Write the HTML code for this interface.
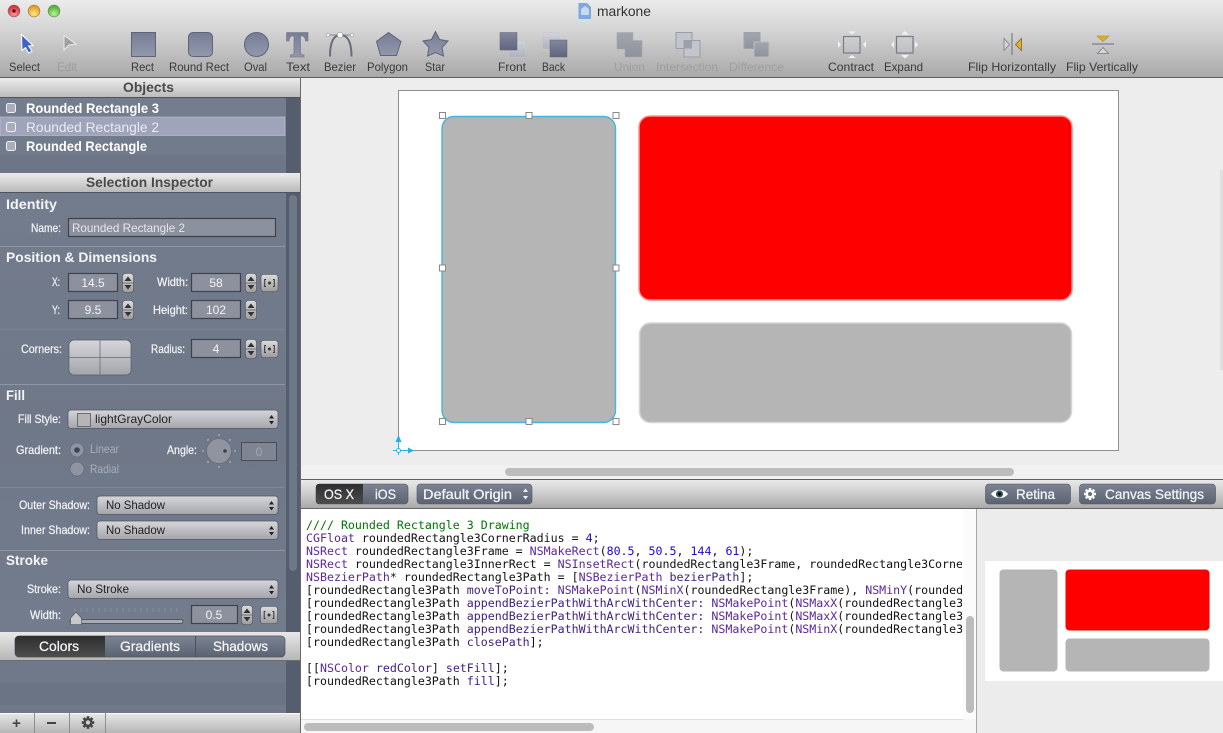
<!DOCTYPE html>
<html><head><meta charset="utf-8"><title>markone</title>
<style>
html,body{margin:0;padding:0;background:#ededed;overflow:hidden}
svg{display:block}
text{font-family:"Liberation Sans",sans-serif;font-size:11px;white-space:pre}
.t{fill:#3a3a3a;font-size:12px}
.d{fill:#9e9e9e;font-size:12px}
.l{fill:#f0f1f4;font-size:12px;stroke:#f0f1f4;stroke-width:.25px}
.h{fill:#f4f5f7;font-size:14px;font-weight:bold}
.o{fill:#fff;font-size:14px;font-weight:bold}
.hd{fill:#4a4a4a;font-size:14px;font-weight:bold}
.v{fill:#f2f3f6;font-size:12px;text-anchor:middle}
.p{fill:#222;font-size:12px}
.b{fill:#f4f5f7;font-size:14px;stroke:#f4f5f7;stroke-width:.25px}
.c{font-family:"DejaVu Sans Mono","Liberation Mono",monospace;font-size:11.62px;fill:#111}
.g{fill:#007400}.m{fill:#5c2699}.n{fill:#2a00cf}.k{fill:#3d1d81}
</style></head><body>
<svg xmlns="http://www.w3.org/2000/svg" width="1223" height="733" viewBox="0 0 1223 733">
<defs>
<linearGradient id="tb" x1="0" y1="0" x2="0" y2="1"><stop offset="0" stop-color="#ebebeb"/><stop offset=".4" stop-color="#d4d4d4"/><stop offset="1" stop-color="#a9a9a9"/></linearGradient>
<linearGradient id="hd" x1="0" y1="0" x2="0" y2="1"><stop offset="0" stop-color="#ececec"/><stop offset="1" stop-color="#b9b9b9"/></linearGradient>
<linearGradient id="pn" x1="0" y1="0" x2="0" y2="1"><stop offset="0" stop-color="#737c8c"/><stop offset=".55" stop-color="#6f7888"/><stop offset="1" stop-color="#737c8c"/></linearGradient>
<linearGradient id="ic" x1="0" y1="0" x2="0" y2="1"><stop offset="0" stop-color="#777d95"/><stop offset="1" stop-color="#9297ab"/></linearGradient>
<linearGradient id="dk" x1="0" y1="0" x2="0" y2="1"><stop offset="0" stop-color="#82879e"/><stop offset="1" stop-color="#5f657d"/></linearGradient>
<linearGradient id="lt" x1="0" y1="0" x2="0" y2="1"><stop offset="0" stop-color="#d2d3da"/><stop offset="1" stop-color="#aeb1be"/></linearGradient>
<linearGradient id="gy" x1="0" y1="0" x2="0" y2="1"><stop offset="0" stop-color="#a3a5ae"/><stop offset="1" stop-color="#8f929d"/></linearGradient>
<linearGradient id="pp" x1="0" y1="0" x2="0" y2="1"><stop offset="0" stop-color="#d6d6da"/><stop offset="1" stop-color="#a3a5ab"/></linearGradient>
<linearGradient id="st" x1="0" y1="0" x2="0" y2="1"><stop offset="0" stop-color="#dcdcdc"/><stop offset="1" stop-color="#9c9c9c"/></linearGradient>
<linearGradient id="sl" x1="0" y1="0" x2="0" y2="1"><stop offset="0" stop-color="#7c8494"/><stop offset="1" stop-color="#5b6373"/></linearGradient>
<linearGradient id="bk" x1="0" y1="0" x2="0" y2="1"><stop offset="0" stop-color="#2e2e2e"/><stop offset="1" stop-color="#4d4d4d"/></linearGradient>
<linearGradient id="ct" x1="0" y1="0" x2="0" y2="1"><stop offset="0" stop-color="#e8e8e8"/><stop offset="1" stop-color="#b5b5b5"/></linearGradient>
<radialGradient id="rr" cx=".5" cy=".75" r=".65"><stop offset="0" stop-color="#ff9a9a"/><stop offset="1" stop-color="#d5303a"/></radialGradient>
<radialGradient id="ry" cx=".5" cy=".75" r=".65"><stop offset="0" stop-color="#ffe88a"/><stop offset="1" stop-color="#e09a20"/></radialGradient>
<radialGradient id="rg" cx=".5" cy=".75" r=".65"><stop offset="0" stop-color="#b8f590"/><stop offset="1" stop-color="#52ad3a"/></radialGradient>
<g id="step"><rect x="0" y="0" width="11" height="19" rx="3" fill="url(#st)" stroke="#4d5361" stroke-width=".6"/><line x1="0" y1="9.5" x2="11" y2="9.5" stroke="#5a5f6b" stroke-width=".8"/><path d="M5.5 3L9 7.5H2Z" fill="#333"/><path d="M5.5 16L9 11.5H2Z" fill="#333"/></g>
<g id="lock"><rect x="0" y="0" width="17" height="17" rx="2.5" fill="url(#st)" stroke="#4d5361" stroke-width=".6"/><path d="M5 5H3.7V12H5M12 5H13.3V12H12" fill="none" stroke="#333" stroke-width="1"/><circle cx="8.5" cy="8.5" r="1.5" fill="#333"/></g>
<g id="ud"><path d="M0 3.5L2.5 0L5 3.5Z" fill="#222"/><path d="M0 6L2.5 9.5L5 6Z" fill="#222"/></g>
<g id="gear"><circle cx="0" cy="0" r="3.4" fill="none" stroke="currentColor" stroke-width="2.4"/><g fill="currentColor"><path id="tooth" d="M-1.3 -6.3H1.3V-3.5H-1.3Z"/><path d="M-1.3 -6.3H1.3V-3.5H-1.3Z" transform="rotate(45)"/><path d="M-1.3 -6.3H1.3V-3.5H-1.3Z" transform="rotate(90)"/><path d="M-1.3 -6.3H1.3V-3.5H-1.3Z" transform="rotate(135)"/><path d="M-1.3 -6.3H1.3V-3.5H-1.3Z" transform="rotate(180)"/><path d="M-1.3 -6.3H1.3V-3.5H-1.3Z" transform="rotate(225)"/><path d="M-1.3 -6.3H1.3V-3.5H-1.3Z" transform="rotate(270)"/><path d="M-1.3 -6.3H1.3V-3.5H-1.3Z" transform="rotate(315)"/></g></g>
<clipPath id="cc"><rect x="302" y="510" width="660" height="210"/></clipPath>
</defs>

<!-- toolbar -->
<rect width="1223" height="77" fill="url(#tb)"/>
<rect y="77" width="1223" height="1" fill="#5d5d5d"/>
<circle cx="14" cy="11" r="5.9" fill="url(#rr)" stroke="#8a5a5a" stroke-width=".6"/><circle cx="14" cy="11" r="1.7" fill="#5a0a10"/>
<circle cx="34" cy="11" r="5.9" fill="url(#ry)" stroke="#99783c" stroke-width=".6"/>
<circle cx="54" cy="11" r="5.9" fill="url(#rg)" stroke="#5d8a4c" stroke-width=".6"/>
<path d="M578.5 3H587L591 7V19H578.5Z" fill="#7fa9dc"/><path d="M581 9L585 6L589 9V15H581Z" fill="#d8e6f6" opacity=".8"/>
<text x="597" y="16" textLength="54" lengthAdjust="spacingAndGlyphs" style="font-size:14px" fill="#333">markone</text>

<path d="M21.5 34.5L33 45.5L28.5 46L32 51L28.5 53L25.5 47.5L22 50.5Z" fill="#3c64c8" stroke="#fff" stroke-width="1"/>
<path d="M64 35.5L76 44L69 45L64 50Z" fill="#a0a0a0" stroke="#eaeaea" stroke-width="1"/>
<rect x="131.5" y="32.5" width="24" height="24" fill="url(#ic)" stroke="#5e6479"/>
<rect x="188.5" y="32.5" width="24" height="24" rx="4.5" fill="url(#ic)" stroke="#5e6479"/>
<circle cx="256.5" cy="44.5" r="12" fill="url(#ic)" stroke="#5e6479"/>
<path d="M286.5 32.5H308V41H305.5C305 37.5 304 36 301.5 36H300.5V53C300.5 54.5 301.5 55 304 55V57H290.5V55C293 55 294 54.5 294 53V36H293C290.5 36 289.5 37.5 289 41H286.5Z" fill="url(#ic)" stroke="#6a7086" stroke-width=".6"/>
<path d="M330 56.5C330 43 333 35 340.5 35C348 35 351.5 43 351.5 56.5" fill="none" stroke="#666c83" stroke-width="2"/>
<line x1="328" y1="35" x2="352" y2="35" stroke="#777" stroke-width=".8"/>
<circle cx="328" cy="35" r="1.7" fill="#fff" stroke="#777" stroke-width=".5"/><circle cx="340" cy="35" r="2.7" fill="#fff" stroke="#777" stroke-width=".5"/><circle cx="352" cy="35" r="1.7" fill="#fff" stroke="#777" stroke-width=".5"/>
<path d="M388.5 32.5L401 41.5L396.5 55.5H380.5L376.5 41.5Z" fill="url(#ic)" stroke="#5e6479"/>
<path d="M435.5 31.5L439.5 39.5L448 41L442 47.5L443.5 56L435.5 52.5L427.5 56L429 47.5L423 41L431.5 39.5Z" fill="url(#ic)" stroke="#5e6479"/>

<rect x="508.5" y="41" width="17" height="16.5" fill="url(#lt)" stroke="#c5c7cf" stroke-width=".5"/>
<rect x="500" y="32.5" width="17" height="17.5" fill="url(#dk)" stroke="#5e6479" stroke-width=".5"/>
<rect x="542.5" y="32.5" width="17" height="16.5" fill="url(#lt)" stroke="#c5c7cf" stroke-width=".5"/>
<rect x="550" y="40" width="17" height="17" fill="url(#dk)" stroke="#5e6479" stroke-width=".5"/>
<path d="M617 32.5H633V40.5H642V57H625V49H617Z" fill="url(#gy)" stroke="#a5a7b0" stroke-width=".6"/>
<rect x="676" y="32.5" width="16" height="16" fill="#c3c5cc" stroke="#9a9ca6"/><rect x="684" y="40.5" width="16" height="16.5" fill="#c3c5cc" stroke="#9a9ca6"/><rect x="684" y="40.5" width="8" height="8" fill="#9da0aa"/>
<rect x="744" y="32.5" width="16" height="16" fill="url(#gy)" stroke="#a0a2ab"/><rect x="754" y="42" width="15" height="15" fill="url(#gy)" stroke="#b9bbc2"/>

<rect x="843.5" y="36.5" width="16.5" height="16.5" fill="none" stroke="#777b8a" stroke-width="1.2"/>
<path d="M848 31.5H856L852 34.5ZM848 58H856L852 55ZM838 41V48L841 44.5ZM866 41V48L863 44.5Z" fill="#f2f2f2"/>
<rect x="896.5" y="36.5" width="16.5" height="16.5" fill="none" stroke="#777b8a" stroke-width="1.2"/>
<path d="M901 34.5H909L905 31ZM901 55H909L905 58.5ZM894 41V48L891 44.5ZM915 41V48L918 44.5Z" fill="#f2f2f2"/>
<line x1="1012" y1="33" x2="1012" y2="55" stroke="#6a6c78"/>
<path d="M1004 38.5L1009.5 44.5L1004 50.5Z" fill="#d6d6d8" stroke="#8a8c98"/>
<path d="M1021.5 38.5L1015.5 44.5L1021.5 50.5Z" fill="#e9ae1e" stroke="#8a7a40"/>
<line x1="1092" y1="44" x2="1114" y2="44" stroke="#6a6c78"/>
<path d="M1097 36H1109L1103 41.5Z" fill="#e9ae1e" stroke="#9a8a50" stroke-width=".6"/>
<path d="M1097.5 53.5H1108.5L1103 47.5Z" fill="#d6d6d8" stroke="#8a8c98"/>

<g>
<text class="t" x="9" y="71" textLength="31" lengthAdjust="spacingAndGlyphs">Select</text>
<text class="d" x="57" y="71" textLength="20" lengthAdjust="spacingAndGlyphs">Edit</text>
<text class="t" x="131" y="71" textLength="23" lengthAdjust="spacingAndGlyphs">Rect</text>
<text class="t" x="169" y="71" textLength="60" lengthAdjust="spacingAndGlyphs">Round Rect</text>
<text class="t" x="244" y="71" textLength="23" lengthAdjust="spacingAndGlyphs">Oval</text>
<text class="t" x="286" y="71" textLength="24" lengthAdjust="spacingAndGlyphs">Text</text>
<text class="t" x="324" y="71" textLength="32" lengthAdjust="spacingAndGlyphs">Bezier</text>
<text class="t" x="367" y="71" textLength="41" lengthAdjust="spacingAndGlyphs">Polygon</text>
<text class="t" x="425" y="71" textLength="20" lengthAdjust="spacingAndGlyphs">Star</text>
<text class="t" x="498" y="71" textLength="28" lengthAdjust="spacingAndGlyphs">Front</text>
<text class="t" x="542" y="71" textLength="23" lengthAdjust="spacingAndGlyphs">Back</text>
<text class="d" x="614" y="71" textLength="31" lengthAdjust="spacingAndGlyphs">Union</text>
<text class="d" x="656" y="71" textLength="62" lengthAdjust="spacingAndGlyphs">Intersection</text>
<text class="d" x="729" y="71" textLength="55" lengthAdjust="spacingAndGlyphs">Difference</text>
<text class="t" x="828" y="71" textLength="46" lengthAdjust="spacingAndGlyphs">Contract</text>
<text class="t" x="884" y="71" textLength="39" lengthAdjust="spacingAndGlyphs">Expand</text>
<text class="t" x="968" y="71" textLength="88" lengthAdjust="spacingAndGlyphs">Flip Horizontally</text>
<text class="t" x="1066" y="71" textLength="72" lengthAdjust="spacingAndGlyphs">Flip Vertically</text>
</g>

<!-- left panel -->
<rect x="0" y="78" width="300" height="655" fill="#6f7888"/>
<rect x="0" y="78" width="300" height="20" fill="url(#hd)"/>
<rect x="0" y="97" width="300" height="1.5" fill="#50525c"/>
<text class="hd" x="123" y="92" textLength="51" lengthAdjust="spacingAndGlyphs">Objects</text>
<rect x="0" y="98" width="286" height="75" fill="#6d7686"/>
<rect x="0" y="98" width="286" height="19" fill="#747d8d"/>
<rect x="0" y="117" width="285" height="19" fill="#9fa4ba" stroke="#c2c5d2" stroke-width=".6"/>
<rect x="0" y="136" width="286" height="19" fill="#727b8b"/>
<rect x="286" y="98" width="14" height="75" fill="#565d6c"/>
<g fill="#a9adb5" stroke="#eef" stroke-width="1">
<rect x="6.5" y="103.5" width="9" height="9" rx="2"/><rect x="6.5" y="122.5" width="9" height="9" rx="2"/><rect x="6.5" y="141.5" width="9" height="9" rx="2"/>
</g>
<text class="o" x="26" y="113" textLength="133" lengthAdjust="spacingAndGlyphs">Rounded Rectangle 3</text>
<text x="26" y="132" textLength="133" lengthAdjust="spacingAndGlyphs" style="font-size:14px" fill="#e9ebf1">Rounded Rectangle 2</text>
<text class="o" x="26" y="151" textLength="121" lengthAdjust="spacingAndGlyphs">Rounded Rectangle</text>

<rect x="0" y="173" width="300" height="19" fill="url(#hd)"/>
<rect x="0" y="192" width="300" height="1" fill="#50525c"/>
<text class="hd" x="86" y="187" textLength="127" lengthAdjust="spacingAndGlyphs">Selection Inspector</text>
<rect x="0" y="193" width="286" height="439" fill="url(#pn)"/>
<rect x="286" y="193" width="14" height="439" fill="#565d6c"/>
<rect x="289" y="195" width="8" height="376" rx="4" fill="#6f7888"/>
<g fill="#8e95a3"><rect y="246" width="285" height="1"/><rect y="550" width="285" height="1"/><rect y="384" width="285" height="1"/></g>
<g fill="#7f8695"><rect y="329" width="285" height="1"/><rect y="487" width="285" height="1"/></g>

<text class="h" x="6" y="209" textLength="51" lengthAdjust="spacingAndGlyphs">Identity</text>
<text class="l" x="31" y="232" textLength="30" lengthAdjust="spacingAndGlyphs">Name:</text>
<rect x="68.5" y="218.5" width="207" height="18" fill="#8c919d" stroke="#3d4250" stroke-width="1.2"/>
<text x="72" y="232" textLength="113" lengthAdjust="spacingAndGlyphs" fill="#e4e6ea" style="font-size:12px">Rounded Rectangle 2</text>

<text class="h" x="6" y="262" textLength="151" lengthAdjust="spacingAndGlyphs">Position &amp; Dimensions</text>
<text class="l" x="52" y="286" textLength="8" lengthAdjust="spacingAndGlyphs">X:</text>
<rect x="68.5" y="273.5" width="49" height="18" fill="#8c919d" stroke="#3d4250" stroke-width="1.2"/><text class="v" x="93" y="287">14.5</text>
<use href="#step" x="122.5" y="273.5"/>
<text class="l" x="157" y="286" textLength="31" lengthAdjust="spacingAndGlyphs">Width:</text>
<rect x="191.5" y="273.5" width="49" height="18" fill="#8c919d" stroke="#3d4250" stroke-width="1.2"/><text class="v" x="216" y="287">58</text>
<use href="#step" x="245.5" y="273.5"/>
<use href="#lock" x="261" y="274.5"/>
<text class="l" x="52" y="314" textLength="8" lengthAdjust="spacingAndGlyphs">Y:</text>
<rect x="68.5" y="300.5" width="49" height="18" fill="#8c919d" stroke="#3d4250" stroke-width="1.2"/><text class="v" x="93" y="314">9.5</text>
<use href="#step" x="122.5" y="300.5"/>
<text class="l" x="153" y="314" textLength="35" lengthAdjust="spacingAndGlyphs">Height:</text>
<rect x="191.5" y="300.5" width="49" height="18" fill="#8c919d" stroke="#3d4250" stroke-width="1.2"/><text class="v" x="216" y="314">102</text>
<use href="#step" x="245.5" y="300.5"/>

<text class="l" x="21" y="353" textLength="41" lengthAdjust="spacingAndGlyphs">Corners:</text>
<rect x="69" y="340" width="62" height="35" rx="5" fill="url(#pp)" stroke="#565b68" stroke-width=".7"/>
<path d="M100 340V375M69 357.5H131" stroke="#6a6e78" stroke-width=".8"/>
<text class="l" x="151" y="353" textLength="34" lengthAdjust="spacingAndGlyphs">Radius:</text>
<rect x="191.5" y="339.5" width="49" height="18" fill="#8c919d" stroke="#3d4250" stroke-width="1.2"/><text class="v" x="216" y="353">4</text>
<use href="#step" x="245.5" y="339.5"/>
<use href="#lock" x="261" y="340.5"/>

<text class="h" x="6" y="400" textLength="19" lengthAdjust="spacingAndGlyphs">Fill</text>
<text class="l" x="18" y="423" textLength="43" lengthAdjust="spacingAndGlyphs">Fill Style:</text>
<rect x="68" y="410" width="210" height="18.5" rx="3" fill="url(#pp)" stroke="#4f5462" stroke-width=".7"/>
<rect x="77.5" y="413.5" width="13" height="13" fill="#b5b5b5" stroke="#5a5a5a" stroke-width=".8"/>
<text class="p" x="95" y="423" textLength="77" lengthAdjust="spacingAndGlyphs">lightGrayColor</text>
<use href="#ud" x="269" y="415"/>

<text class="l" x="16" y="454" textLength="45" lengthAdjust="spacingAndGlyphs">Gradient:</text>
<circle cx="77" cy="450" r="7" fill="#8f94a0" stroke="#5d6372" stroke-width=".6"/><circle cx="77" cy="450" r="2.8" fill="#3f4450"/>
<text x="90" y="453" textLength="29" lengthAdjust="spacingAndGlyphs" fill="#a9aeb8" style="font-size:12px">Linear</text>
<circle cx="77" cy="469" r="7" fill="#8f94a0" stroke="#5d6372" stroke-width=".6"/>
<text x="90" y="473" textLength="29" lengthAdjust="spacingAndGlyphs" fill="#a9aeb8" style="font-size:12px">Radial</text>
<text class="l" x="167" y="454" textLength="30" lengthAdjust="spacingAndGlyphs">Angle:</text>
<circle cx="219" cy="451" r="12.5" fill="#8f94a0" stroke="#5d6372" stroke-width=".6"/><circle cx="225" cy="451" r="1.8" fill="#3a3f4a"/>
<g fill="#d0d3d9"><circle cx="219" cy="435" r=".7"/><circle cx="219" cy="467" r=".7"/><circle cx="203" cy="451" r=".7"/><circle cx="235" cy="451" r=".7"/><circle cx="208" cy="440" r=".7"/><circle cx="230" cy="440" r=".7"/><circle cx="208" cy="462" r=".7"/><circle cx="230" cy="462" r=".7"/></g>
<rect x="241.5" y="442.5" width="35" height="18" fill="#7f8592" stroke="#3d4250" stroke-width=".8"/><text x="259" y="456" text-anchor="middle" fill="#a3a8b2" style="font-size:12px">0</text>

<text class="l" x="19" y="509" textLength="71" lengthAdjust="spacingAndGlyphs">Outer Shadow:</text>
<rect x="97" y="496" width="181" height="18.5" rx="3" fill="url(#pp)" stroke="#4f5462" stroke-width=".7"/>
<text class="p" x="106" y="509" textLength="59" lengthAdjust="spacingAndGlyphs">No Shadow</text>
<use href="#ud" x="269" y="501"/>
<text class="l" x="21" y="534" textLength="69" lengthAdjust="spacingAndGlyphs">Inner Shadow:</text>
<rect x="97" y="521" width="181" height="18.5" rx="3" fill="url(#pp)" stroke="#4f5462" stroke-width=".7"/>
<text class="p" x="106" y="534" textLength="59" lengthAdjust="spacingAndGlyphs">No Shadow</text>
<use href="#ud" x="269" y="526"/>

<text class="h" x="6" y="565" textLength="42" lengthAdjust="spacingAndGlyphs">Stroke</text>
<text class="l" x="27" y="593" textLength="34" lengthAdjust="spacingAndGlyphs">Stroke:</text>
<rect x="68" y="580" width="210" height="18.5" rx="3" fill="url(#pp)" stroke="#4f5462" stroke-width=".7"/>
<text class="p" x="77" y="593" textLength="52" lengthAdjust="spacingAndGlyphs">No Stroke</text>
<use href="#ud" x="269" y="585"/>
<text class="l" x="30" y="619" textLength="31" lengthAdjust="spacingAndGlyphs">Width:</text>
<path d="M75 608V612M81 608V612M87 608V612M93 608V612M99 608V612M105 608V612M111 608V612M117 608V612M123 608V612M129 608V612M135 608V612M141 608V612M147 608V612M153 608V612M159 608V612M165 608V612M171 608V612M177 608V612" stroke="#8b919e" stroke-width=".8"/>
<rect x="70" y="619.5" width="113" height="4" rx="2" fill="#a7abb2" stroke="#3e4350" stroke-width=".8"/>
<path d="M76 612L81.5 618V624.5H70.5V618Z" fill="#c7c8cb" stroke="#4a4f5c" stroke-width=".6"/>
<rect x="191.5" y="605.5" width="46" height="18" fill="#8c919d" stroke="#3d4250" stroke-width="1.2"/><text class="v" x="214" y="619">0.5</text>
<use href="#step" x="241.5" y="605.5"/>
<use href="#lock" x="260.5" y="606.5"/>

<rect x="0" y="632" width="300" height="29" fill="url(#ct)"/>
<rect x="0" y="660" width="300" height="1" fill="#6c6c6c"/>
<rect x="15" y="636" width="270" height="21" rx="4" fill="url(#sl)" stroke="#4f5462" stroke-width=".7"/>
<path d="M19 636H105V657H19C16.5 657 15 655.5 15 653V640C15 637.5 16.5 636 19 636Z" fill="url(#bk)"/>
<path d="M195.5 636V657" stroke="#4c5260"/>
<text class="b" x="39" y="651" textLength="40" lengthAdjust="spacingAndGlyphs">Colors</text>
<text class="b" x="120" y="651" textLength="60" lengthAdjust="spacingAndGlyphs">Gradients</text>
<text class="b" x="213" y="651" textLength="55" lengthAdjust="spacingAndGlyphs">Shadows</text>
<rect x="0" y="661" width="286" height="52" fill="#707989"/>
<rect x="0" y="683" width="286" height="22" fill="#6b7484"/>
<rect x="286" y="661" width="14" height="52" fill="#565d6c"/>
<rect x="0" y="713" width="300" height="20" fill="url(#ct)"/>
<rect x="0" y="713" width="300" height="1" fill="#fafafa"/>
<path d="M34.5 713V733M69.5 713V733M105.5 713V733" stroke="#8e8e8e"/>
<text x="16.5" y="728" text-anchor="middle" style="font-size:15px;font-weight:bold" fill="#444">+</text>
<rect x="47" y="722" width="9" height="2" fill="#444"/>
<g transform="translate(88,722.5)" color="#444"><use href="#gear"/></g>

<!-- divider + canvas -->
<rect x="300" y="78" width="1" height="655" fill="#6a6a6a"/>
<rect x="301" y="78" width="922" height="402" fill="#ededed"/>
<rect x="1220" y="170" width="3" height="200" fill="#dfdfdf"/>
<rect x="398.5" y="90.5" width="720" height="360" fill="#fff" stroke="#8f8f8f"/>
<rect x="442" y="116.5" width="173.5" height="306" rx="12" fill="#b5b5b5" stroke="#46b4e0" stroke-width="1.4"/>
<rect x="639" y="116" width="433" height="184" rx="11" fill="#ff0000" stroke="#ff9090" stroke-width="1.5"/>
<rect x="639.5" y="323" width="432" height="99.5" rx="11" fill="#b5b5b5" stroke="#d6d6d6" stroke-width="1.5"/>
<g fill="#fff" stroke="#888" stroke-width="1">
<rect x="439.5" y="112.5" width="6" height="6"/><rect x="526" y="112.5" width="6" height="6"/><rect x="613" y="112.5" width="6" height="6"/>
<rect x="439.5" y="265" width="6" height="6"/><rect x="613" y="265" width="6" height="6"/>
<rect x="439.5" y="418.5" width="6" height="6"/><rect x="526" y="418.5" width="6" height="6"/><rect x="613" y="418.5" width="6" height="6"/>
</g>
<path d="M398.5 441V455M393 450.5H408" stroke="#2fb2ea" stroke-width="1"/>
<path d="M398.5 435L401.5 442H395.5ZM414 450.5L408 447.5V453.5Z" fill="#1fb0ee"/>
<circle cx="398.5" cy="450.5" r="2" fill="#fff" stroke="#2fb2ea"/>
<rect x="301" y="465" width="922" height="14" fill="#f1f1f1"/>
<rect x="505" y="468" width="509" height="8" rx="4" fill="#bcbcbc"/>

<!-- bottom bar -->
<rect x="301" y="479" width="922" height="29" fill="url(#tb)"/>
<rect x="301" y="479" width="922" height="1" fill="#5d5d5d"/>
<rect x="301" y="508" width="922" height="1" fill="#666"/>
<rect x="316" y="484" width="92" height="20" rx="3.5" fill="url(#sl)" stroke="#4f5462" stroke-width=".6"/>
<path d="M319 484H363V504H319C317 504 316 503 316 501V487C316 485 317 484 319 484Z" fill="url(#bk)"/>
<text class="b" x="324" y="499" textLength="30" lengthAdjust="spacingAndGlyphs">OS X</text>
<text class="b" x="375" y="499" textLength="21" lengthAdjust="spacingAndGlyphs">iOS</text>
<rect x="417" y="484" width="115" height="20" rx="3.5" fill="url(#sl)" stroke="#4f5462" stroke-width=".6"/>
<text class="b" x="423" y="499" textLength="89" lengthAdjust="spacingAndGlyphs">Default Origin</text>
<path d="M523 492L525.5 488.5L528 492ZM523 496L525.5 499.5L528 496Z" fill="#f0f0f0"/>
<rect x="985.5" y="484" width="85" height="20" rx="3.5" fill="url(#sl)" stroke="#4f5462" stroke-width=".6"/>
<path d="M991 494C995 488.5 1004 488.5 1008 494C1004 499.5 995 499.5 991 494Z" fill="#fff"/>
<circle cx="999.5" cy="494" r="3.6" fill="#2f5a60"/><circle cx="999.5" cy="494" r="1.6" fill="#000"/>
<text class="b" x="1016" y="499" textLength="39" lengthAdjust="spacingAndGlyphs">Retina</text>
<rect x="1079.5" y="484" width="136" height="20" rx="3.5" fill="url(#sl)" stroke="#4f5462" stroke-width=".6"/>
<g transform="translate(1090,494) scale(.95)" color="#fff"><use href="#gear"/></g>
<text class="b" x="1105" y="499" textLength="99" lengthAdjust="spacingAndGlyphs">Canvas Settings</text>

<!-- code -->
<rect x="301" y="509" width="675" height="224" fill="#fff"/>
<g clip-path="url(#cc)">
<text class="c" x="306" y="529"><tspan class="g">//// Rounded Rectangle 3 Drawing</tspan></text>
<text class="c" x="306" y="542"><tspan class="m">CGFloat</tspan> roundedRectangle3CornerRadius = <tspan class="n">4</tspan>;</text>
<text class="c" x="306" y="555"><tspan class="m">NSRect</tspan> roundedRectangle3Frame = <tspan class="m">NSMakeRect</tspan>(<tspan class="n">80.5</tspan>, <tspan class="n">50.5</tspan>, <tspan class="n">144</tspan>, <tspan class="n">61</tspan>);</text>
<text class="c" x="306" y="568"><tspan class="m">NSRect</tspan> roundedRectangle3InnerRect = <tspan class="m">NSInsetRect</tspan>(roundedRectangle3Frame, roundedRectangle3CornerRadius</text>
<text class="c" x="306" y="581"><tspan class="m">NSBezierPath</tspan>* roundedRectangle3Path = [<tspan class="m">NSBezierPath</tspan> <tspan class="k">bezierPath</tspan>];</text>
<text class="c" x="306" y="594">[roundedRectangle3Path <tspan class="k">moveToPoint:</tspan> <tspan class="m">NSMakePoint</tspan>(<tspan class="m">NSMinX</tspan>(roundedRectangle3Frame), <tspan class="m">NSMinY</tspan>(roundedRectangle3</text>
<text class="c" x="306" y="607">[roundedRectangle3Path <tspan class="k">appendBezierPathWithArcWithCenter:</tspan> <tspan class="m">NSMakePoint</tspan>(<tspan class="m">NSMaxX</tspan>(roundedRectangle3Frame</text>
<text class="c" x="306" y="620">[roundedRectangle3Path <tspan class="k">appendBezierPathWithArcWithCenter:</tspan> <tspan class="m">NSMakePoint</tspan>(<tspan class="m">NSMaxX</tspan>(roundedRectangle3Frame</text>
<text class="c" x="306" y="633">[roundedRectangle3Path <tspan class="k">appendBezierPathWithArcWithCenter:</tspan> <tspan class="m">NSMakePoint</tspan>(<tspan class="m">NSMinX</tspan>(roundedRectangle3Frame</text>
<text class="c" x="306" y="646">[roundedRectangle3Path <tspan class="k">closePath</tspan>];</text>
<text class="c" x="306" y="672">[[<tspan class="m">NSColor</tspan> <tspan class="k">redColor</tspan>] <tspan class="k">setFill</tspan>];</text>
<text class="c" x="306" y="685">[roundedRectangle3Path <tspan class="k">fill</tspan>];</text>
</g>
<rect x="963" y="509" width="13" height="211" fill="#fbfbfb"/>
<rect x="966" y="616" width="8" height="97" rx="4" fill="#bcbcbc"/>
<rect x="301" y="719" width="675" height="14" fill="#f6f6f6"/>
<rect x="301" y="719" width="662" height="1" fill="#e0e0e0"/>
<rect x="304" y="723" width="290" height="8" rx="4" fill="#bcbcbc"/>

<!-- preview -->
<rect x="976" y="509" width="1" height="224" fill="#a8a8a8"/>
<rect x="977" y="509" width="246" height="224" fill="#ececec"/>
<rect x="985" y="561" width="238" height="120" fill="#fff"/>
<rect x="999.5" y="569.5" width="58" height="102" rx="4" fill="#b5b5b5"/>
<rect x="1065.5" y="569.5" width="144" height="61" rx="4" fill="#ff0000"/>
<rect x="1065.5" y="638.5" width="144" height="33" rx="4" fill="#b5b5b5"/>
</svg>
</body></html>
